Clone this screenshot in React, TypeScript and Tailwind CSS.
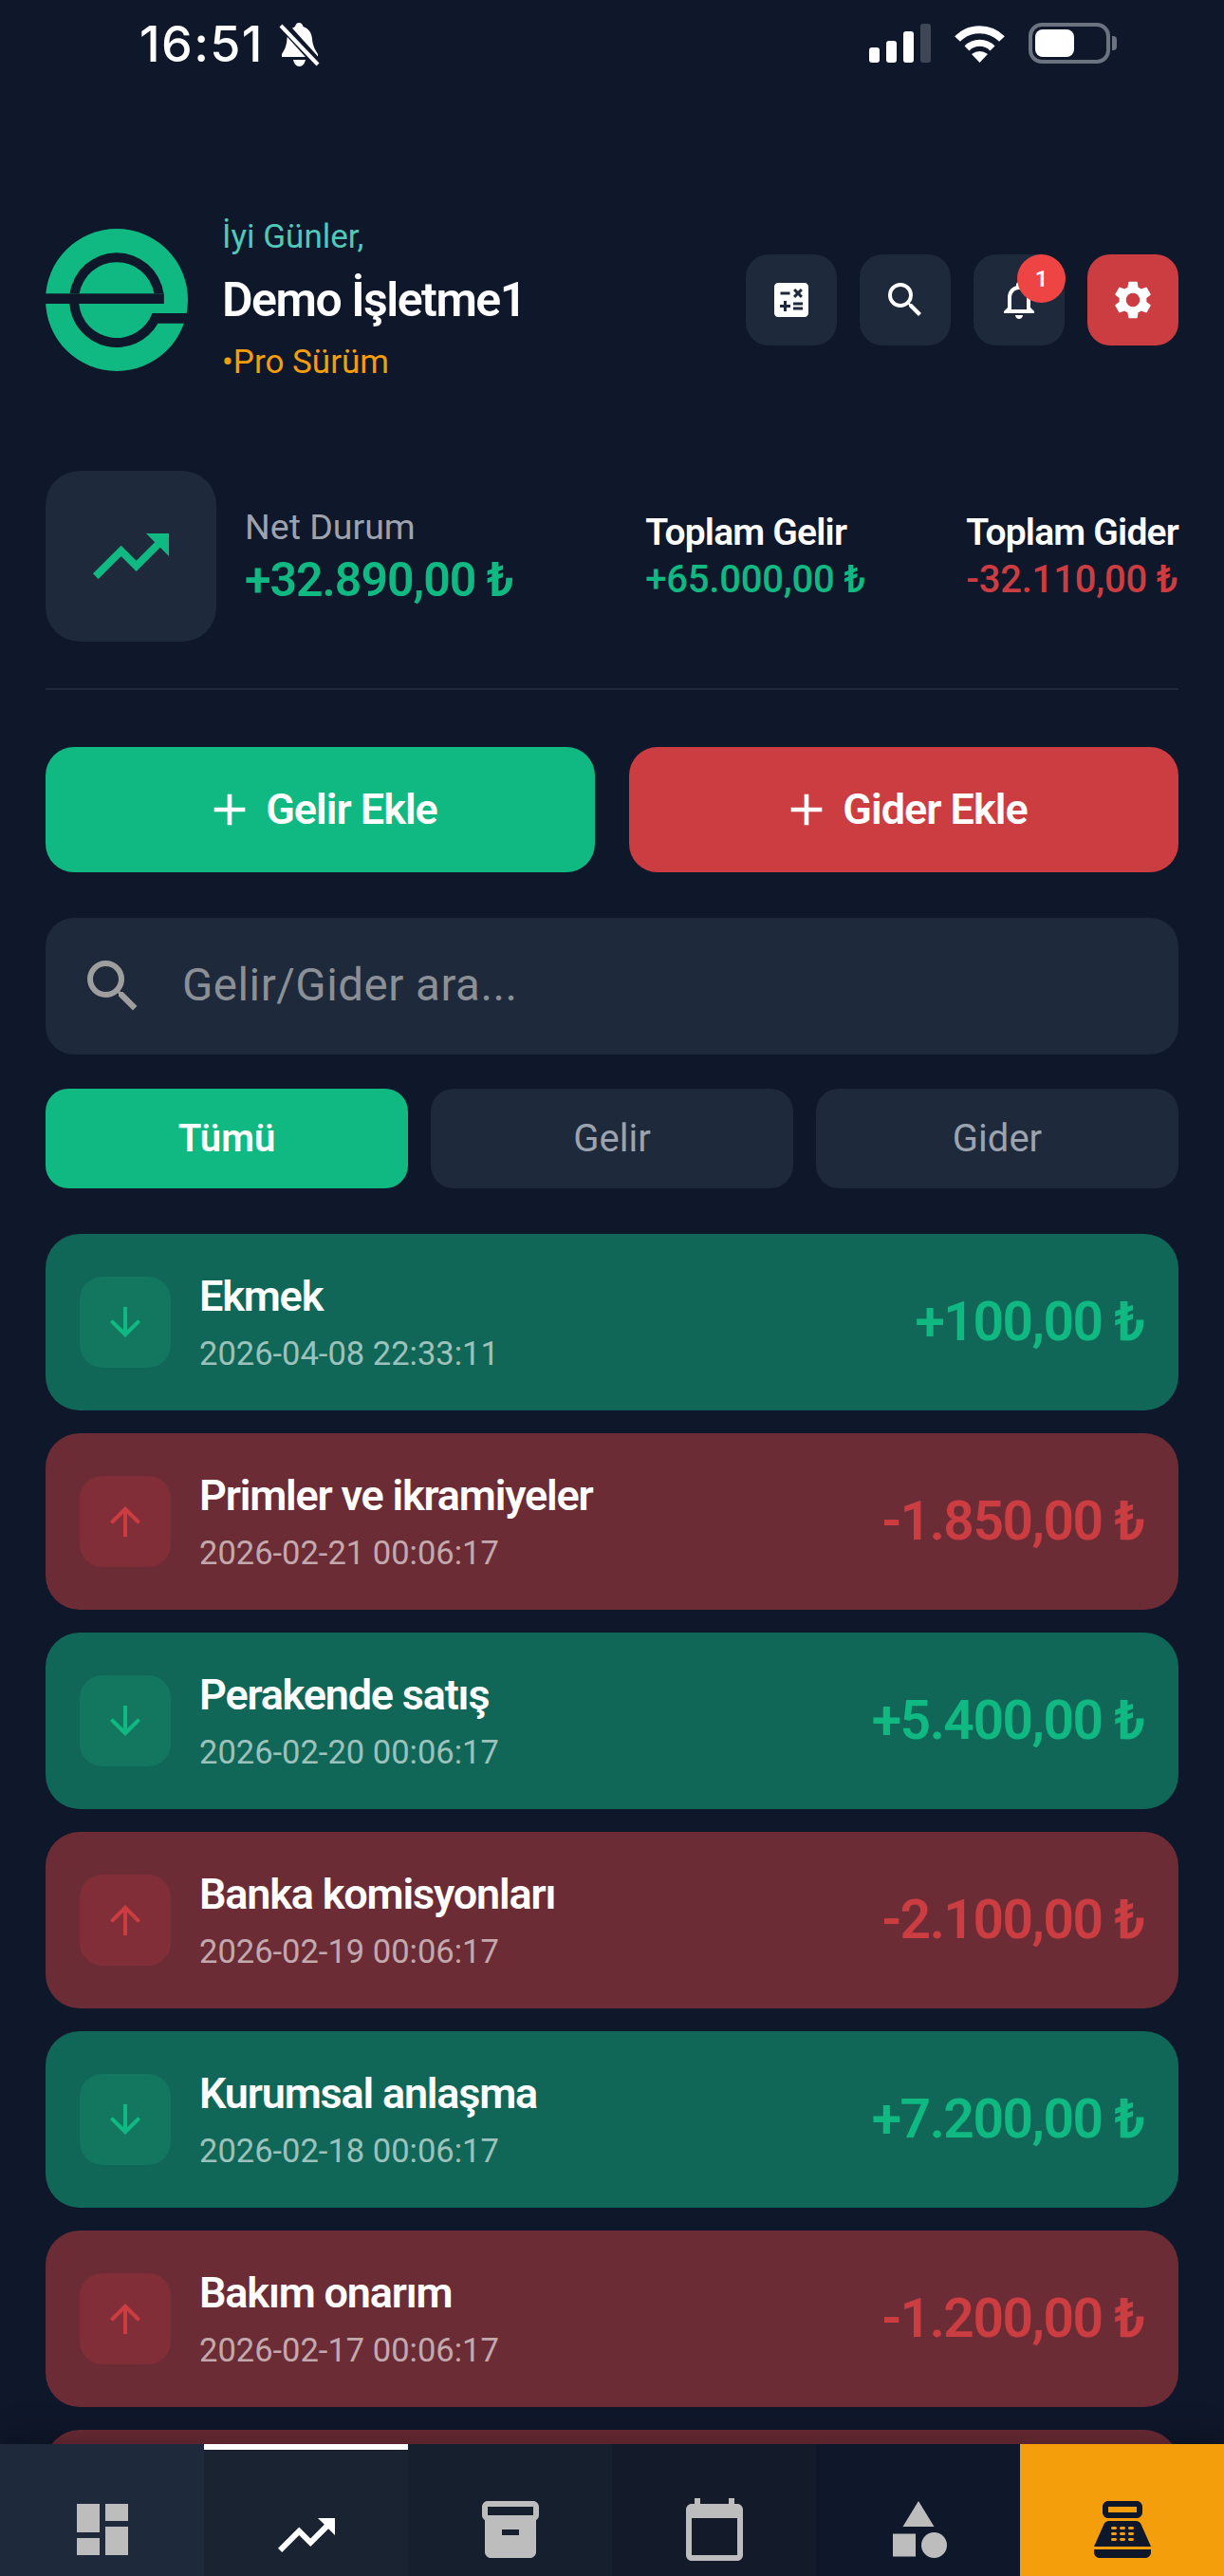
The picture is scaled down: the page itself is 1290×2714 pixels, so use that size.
import React from "react"
import {
  MdAdd,
  MdArrowDownward,
  MdArrowUpward,
  MdCalculate,
  MdCalendarToday,
  MdCategory,
  MdDashboard,
  MdInventory2,
  MdNotificationsNone,
  MdPointOfSale,
  MdSearch,
  MdSettings,
  MdTrendingUp,
} from "react-icons/md"

const transactions = [
  { title: "Ekmek", date: "2026-04-08 22:33:11", amount: "+100,00 ₺", income: true },
  { title: "Primler ve ikramiyeler", date: "2026-02-21 00:06:17", amount: "-1.850,00 ₺", income: false },
  { title: "Perakende satış", date: "2026-02-20 00:06:17", amount: "+5.400,00 ₺", income: true },
  { title: "Banka komisyonları", date: "2026-02-19 00:06:17", amount: "-2.100,00 ₺", income: false },
  { title: "Kurumsal anlaşma", date: "2026-02-18 00:06:17", amount: "+7.200,00 ₺", income: true },
  { title: "Bakım onarım", date: "2026-02-17 00:06:17", amount: "-1.200,00 ₺", income: false },
]

function StatusBar() {
  return (
    <div className="flex h-[90px] shrink-0 items-start justify-between pl-[147px] pr-[113px] pt-[24px]">
      <div className="flex items-center gap-[16px]">
        <span className="font-['Inter'] text-[52px] font-medium leading-[46px] tracking-[1.400px] text-white">16:51</span>
        <svg width="44" height="46" viewBox="0 0 44 46">
          <path d="M21 0c3 0 4 2 4.500 4 6 2 9 7 9.500 13 .5 6 2 10 6 16v3H3v-3c4-6 5-10 5.500-16C9 11 12 6 17 4c.5-2 1.500-4 4-4z" fill="#fff" />
          <path d="M15 39h13c-1 4-3 7-6.500 7S16 43 15 39z" fill="#fff" />
          <path d="M3 1l38 42" stroke="#0f172a" strokeWidth="10" />
          <path d="M2 3l39 41" stroke="#fff" strokeWidth="4" />
        </svg>
      </div>
      <div className="flex items-start">
        <div className="flex h-[42px] items-end gap-[7px]">
          <div className="h-[16px] w-[11px] rounded-[3px] bg-white" />
          <div className="h-[23px] w-[11px] rounded-[3px] bg-white" />
          <div className="h-[33px] w-[11px] rounded-[3px] bg-white" />
          <div className="h-[41px] w-[11px] rounded-[3px] bg-[#3f4756]" />
        </div>
        <svg className="ml-[23px]" width="57" height="42" viewBox="0 0 57 42">
          <path d="M5 17A33 33 0 0 1 52 17" fill="none" stroke="#fff" strokeWidth="8" />
          <path d="M15 27A19 19 0 0 1 42 27" fill="none" stroke="#fff" strokeWidth="7" />
          <path d="M20 33Q28.500 27 37 33L28.500 42Z" fill="#fff" />
        </svg>
        <div className="ml-[23px] flex h-[43px] w-[86px] items-center rounded-[14px] border-[4px] border-[#6b7280] pl-[3px]">
          <div className="h-[29px] w-[41px] rounded-[8px] bg-white" />
        </div>
        <div className="ml-[2px] mt-[14px] h-[15px] w-[5px] rounded-r-[4px] bg-[#6b7280]" />
      </div>
    </div>
  )
}

function Logo() {
  return (
    <svg width="150" height="150" viewBox="0 0 150 150" className="shrink-0">
      <circle cx="75" cy="75" r="75" fill="#10b981" />
      <rect x="0" y="68.300" width="124.800" height="10.700" fill="#0f172a" />
      <path d="M25.500 68.300A50 50 0 0 1 124.500 68.300L114.400 68.300A40 40 0 0 0 35.600 68.300Z" fill="#0f172a" />
      <path d="M25.200 79A50 50 0 0 0 118.500 99.700L150 99.700L150 89L112.500 89A40 40 0 0 1 35.200 79Z" fill="#0f172a" />
    </svg>
  )
}

function HeaderButton({ children, danger }: { children: React.ReactNode; danger?: boolean }) {
  return (
    <div className={`relative flex h-[96px] w-[96px] items-center justify-center rounded-[24px] text-white ${danger ? "bg-[#cc3d42]" : "bg-[#1e293b]"}`}>
      {children}
    </div>
  )
}

function TransactionCard({ title, date, amount, income }: (typeof transactions)[number]) {
  return (
    <div className={`flex h-[186px] shrink-0 items-center rounded-[36px] px-[36px] ${income ? "bg-[#106758]" : "bg-[#6c2c36]"}`}>
      <div className={`flex h-[96px] w-[96px] shrink-0 items-center justify-center rounded-[24px] ${income ? "bg-[#12775e] text-[#10b981]" : "bg-[#812e38] text-[#cc3d42]"}`}>
        {income ? <MdArrowDownward size={48} /> : <MdArrowUpward size={48} />}
      </div>
      <div className="ml-[30px] flex-1">
        <div className="text-[45px] font-semibold leading-[52px] tracking-[-1.2px] text-white">{title}</div>
        <div className="mt-[13px] text-[34.500px] leading-[42px] text-white/60">{date}</div>
      </div>
      <div className={`text-[57px] font-semibold leading-[64px] tracking-[-1.5px] ${income ? "text-[#10b981]" : "text-[#cc3d42]"}`}>{amount}</div>
    </div>
  )
}

function NavCell({ className, children }: { className: string; children: React.ReactNode }) {
  return <div className={`flex flex-1 justify-center pt-[54px] ${className}`}>{children}</div>
}

export default function App() {
  return (
    <div className="flex h-[2714px] w-[1290px] flex-col overflow-hidden bg-[#0f172a] font-['Roboto',sans-serif]">
      <StatusBar />

      <div className="mt-[141px] flex h-[170px] shrink-0 items-center px-[48px]">
        <Logo />
        <div className="ml-[36px] flex-1">
          <div className="text-[35px] leading-[40px] text-[#4fc9b8]">İyi Günler,</div>
          <div className="mt-[18px] text-[50px] font-semibold leading-[56px] tracking-[-1.5px] text-white">Demo İşletme1</div>
          <div className="mt-[18px] text-[35px] leading-[40px] text-[#f59e0b]">•Pro Sürüm</div>
        </div>
        <div className="flex gap-[24px]">
          <HeaderButton><MdCalculate size={48} /></HeaderButton>
          <HeaderButton><MdSearch size={48} /></HeaderButton>
          <HeaderButton>
            <MdNotificationsNone size={48} />
            <div className="absolute right-[-1px] top-0 flex h-[51px] w-[51px] items-center justify-center rounded-full bg-[#ef4444] text-[24px] font-semibold text-white">1</div>
          </HeaderButton>
          <HeaderButton danger><MdSettings size={48} /></HeaderButton>
        </div>
      </div>

      <div className="mt-[95px] flex h-[180px] shrink-0 items-center px-[48px]">
        <div className="flex h-[180px] w-[180px] items-center justify-center rounded-[36px] bg-[#1e293b] text-[#10b981]">
          <MdTrendingUp size={96} />
        </div>
        <div className="ml-[30px]">
          <div className="text-[37.500px] leading-[44px] text-[#9ca3af]">Net Durum</div>
          <div className="mt-[6px] text-[50px] font-semibold leading-[56px] tracking-[-1px] text-[#10b981]">+32.890,00 ₺</div>
        </div>
        <div className="ml-auto flex gap-[106px]">
          <div>
            <div className="text-[39px] font-semibold leading-[44px] tracking-[-0.8px] text-white">Toplam Gelir</div>
            <div className="mt-[6px] text-[40px] font-medium leading-[44px] tracking-[-0.2px] text-[#10b981]">+65.000,00 ₺</div>
          </div>
          <div>
            <div className="text-[39px] font-semibold leading-[44px] tracking-[-0.8px] text-white">Toplam Gider</div>
            <div className="mt-[6px] text-[40px] font-medium leading-[44px] tracking-[-0.2px] text-[#cc3d42]">-32.110,00 ₺</div>
          </div>
        </div>
      </div>

      <div className="mx-[48px] mt-[49px] h-[2px] shrink-0 bg-[#1e293b]" />

      <div className="mx-[48px] mt-[60px] flex shrink-0 gap-[36px]">
        <div className="flex h-[132px] flex-1 items-center justify-center gap-[10px] rounded-[30px] bg-[#10b981] text-[45px] font-semibold tracking-[-1px] text-white">
          <MdAdd size={56} />
          Gelir Ekle
        </div>
        <div className="flex h-[132px] flex-1 items-center justify-center gap-[10px] rounded-[30px] bg-[#cc3d42] text-[45px] font-semibold tracking-[-1px] text-white">
          <MdAdd size={56} />
          Gider Ekle
        </div>
      </div>

      <div className="mx-[48px] mt-[48px] flex h-[144px] shrink-0 items-center rounded-[30px] bg-[#1e293b] pl-[35px]">
        <MdSearch size={72} className="text-[#9e9e9e]" />
        <span className="ml-[37px] text-[47.500px] tracking-[0.5px] text-[#8b8f96]">Gelir/Gider ara...</span>
      </div>

      <div className="mx-[48px] mt-[36px] flex shrink-0 gap-[24px]">
        <div className="flex h-[105px] flex-1 items-center justify-center rounded-[24px] bg-[#10b981] text-[40px] font-semibold text-white">Tümü</div>
        <div className="flex h-[105px] flex-1 items-center justify-center rounded-[24px] bg-[#1e293b] text-[40px] text-[#9ca3af]">Gelir</div>
        <div className="flex h-[105px] flex-1 items-center justify-center rounded-[24px] bg-[#1e293b] text-[40px] text-[#9ca3af]">Gider</div>
      </div>

      <div className="mt-[48px] flex min-h-0 flex-1 flex-col gap-[24px] overflow-hidden px-[48px]">
        {transactions.map((item) => (
          <TransactionCard key={item.date} {...item} />
        ))}
        {/* next row, only its top edge shows above the nav */}
        <div className="h-[186px] shrink-0 rounded-[36px] bg-[#6c2c36]" />
      </div>

      <div className="relative z-10 flex h-[139px] shrink-0 shadow-[0_-8px_30px_rgba(0,0,0,0.25)]">
        <NavCell className="bg-[#1e293b] text-[#bdbdbd]"><MdDashboard size={72} /></NavCell>
        <NavCell className="border-t-[6px] border-white bg-[#1a2331] text-white"><MdTrendingUp size={72} /></NavCell>
        <NavCell className="bg-[#161f2e] text-[#bdbdbd]"><MdInventory2 size={72} /></NavCell>
        <NavCell className="bg-[#131a2a] text-[#bdbdbd]"><MdCalendarToday size={72} /></NavCell>
        <NavCell className="bg-[#0f172a] text-[#bdbdbd]"><MdCategory size={72} /></NavCell>
        <NavCell className="bg-[#f59e0b] text-[#0f172a]"><MdPointOfSale size={72} /></NavCell>
      </div>
    </div>
  )
}
